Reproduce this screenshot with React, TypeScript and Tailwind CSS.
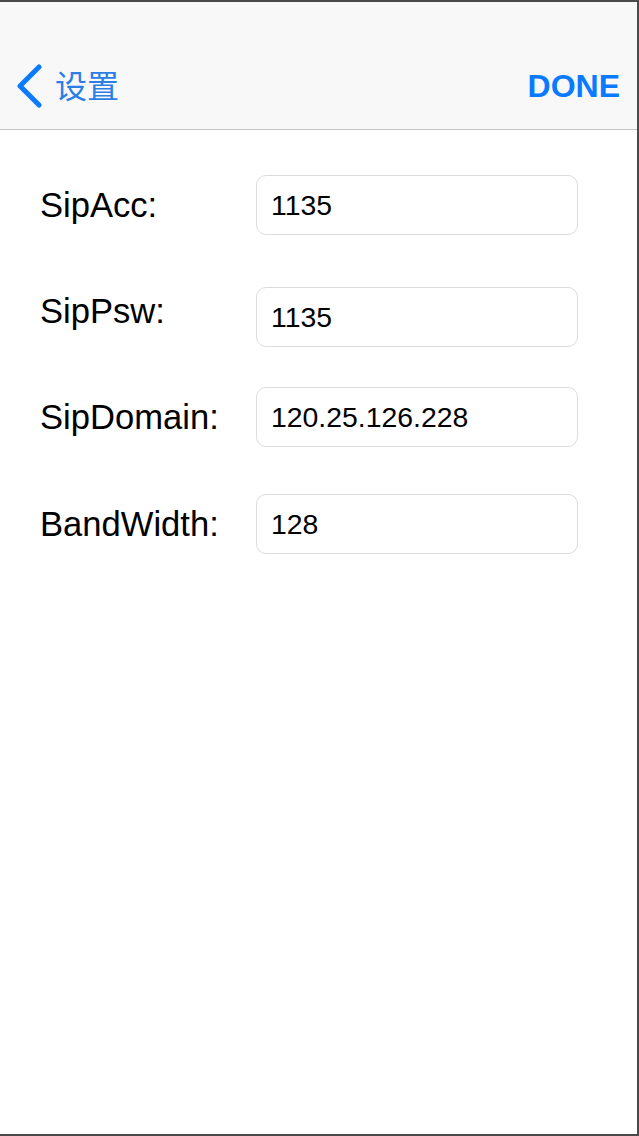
import React from "react";

const rows = [
  { label: "SipAcc:", value: "1135", mt: "mt-[45px]", labelShift: "" },
  { label: "SipPsw:", value: "1135", mt: "mt-[52px]", labelShift: "-translate-y-[6px]" },
  { label: "SipDomain:", value: "120.25.126.228", mt: "mt-[40px]", labelShift: "" },
  { label: "BandWidth:", value: "128", mt: "mt-[47px]", labelShift: "" },
];

export default function App() {
  return (
    <div
      className="w-[639px] h-[1136px] box-border border-t-2 border-r-2 border-b-2 border-[#4a4a4a] bg-white flex flex-col overflow-hidden"
      style={{ fontFamily: '"Liberation Sans", Arial, "Noto Sans CJK SC", sans-serif' }}
    >
      <div className="h-[128px] bg-[#f8f8f8] border-b border-[#c4c4c4] flex flex-col pt-[40px] box-border">
        <div className="flex-1 flex items-center justify-between pl-[15px] pr-[17px]">
          <div className="flex items-center text-[#1f7cf0]">
            <svg width="30" height="44" viewBox="0 0 30 44" className="shrink-0">
              <polyline
                points="24,3 5,22 24,41"
                fill="none"
                stroke="#0a7aff"
                strokeWidth="5"
                strokeLinecap="round"
                strokeLinejoin="round"
              />
            </svg>
            <span
              className="ml-[10px] text-[32px] leading-none text-[#2b7ee6] -translate-y-[2px]"
              style={{ fontFamily: '"Noto Sans CJK SC", "Noto Sans", sans-serif' }}
            >
              设置
            </span>
          </div>
          <span className="text-[32px] font-bold leading-none text-[#0a7aff]">DONE</span>
        </div>
      </div>
      <div className="flex flex-col">
        {rows.map((r) => (
          <div key={r.label} className={`flex items-center ${r.mt}`}>
            <div className={`w-[256px] pl-[40px] text-[34.6px] text-black leading-none ${r.labelShift}`}>
              {r.label}
            </div>
            <div className="w-[322px] h-[60px] box-border border border-[#dcdcdc] rounded-[10px] flex items-center pl-[14px] text-[28.4px] text-black">
              {r.value}
            </div>
          </div>
        ))}
      </div>
    </div>
  );
}
